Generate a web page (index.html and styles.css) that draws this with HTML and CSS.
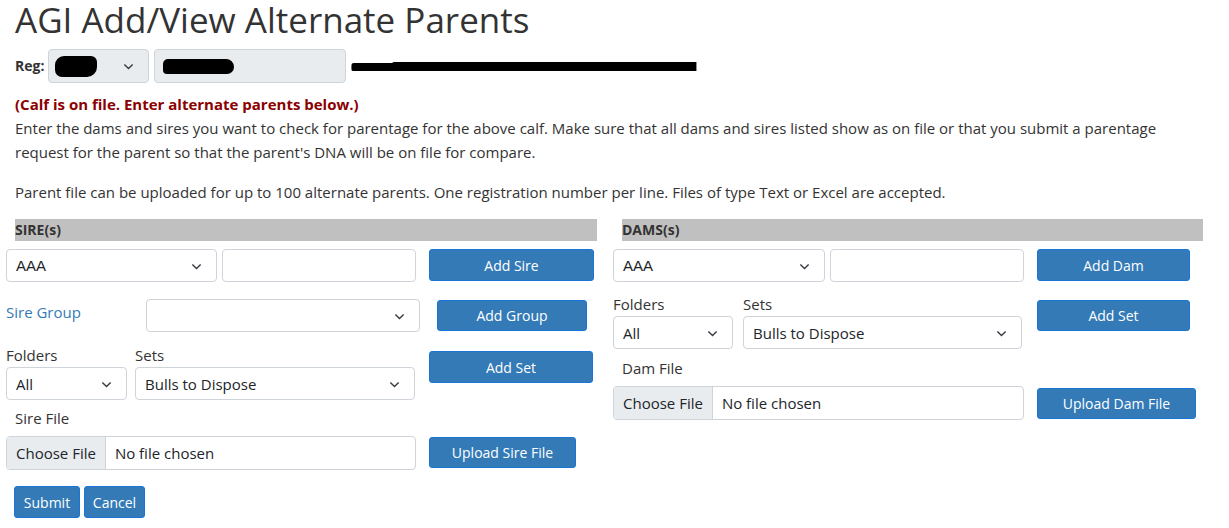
FILE: index.html
```html
<!DOCTYPE html>
<html lang="en">
<head>
    <meta charset="UTF-8">
    <title>AGI Add/View Alternate Parents</title>
    <link rel="stylesheet" href="styles.css">
</head>
<body>
    <div class="page">
        <h1>AGI Add/View Alternate Parents</h1>

        <div class="reg-line">
            <label class="reg-label">Reg:</label>
            <span class="select-wrap reg-breed">
                <span class="fake-select disabled"><span class="blot blot-a"></span></span>
                <svg class="chev" viewBox="0 0 16 16"><path d="M2 5l6 6 6-6"/></svg>
            </span>
            <span class="fake-input disabled reg-num"><span class="blot blot-b"></span></span>
            <span class="blot blot-name"></span>
        </div>

        <p class="notice">(Calf is on file. Enter alternate parents below.)</p>
        <p class="intro">Enter the dams and sires you want to check for parentage for the above calf. Make sure that all dams and sires listed show as on file or that you submit a parentage request for the parent so that the parent's DNA will be on file for compare.</p>
        <p class="intro">Parent file can be uploaded for up to 100 alternate parents. One registration number per line. Files of type Text or Excel are accepted.</p>

        <div class="columns">
            <!-- sires -->
            <div class="col col-sire">
                <div class="section-head">SIRE(s)</div>

                <div class="row">
                    <span class="select-wrap w-breed">
                        <select class="form-select sans"><option>AAA</option></select>
                        <svg class="chev" viewBox="0 0 16 16"><path d="M2 5l6 6 6-6"/></svg>
                    </span>
                    <input type="text" class="form-control w-reg">
                    <button class="btn btn-add">Add Sire</button>
                </div>

                <div class="row row-group">
                    <a href="#" class="group-link">Sire Group</a>
                    <span class="select-wrap w-group">
                        <select class="form-select"><option></option></select>
                        <svg class="chev" viewBox="0 0 16 16"><path d="M2 5l6 6 6-6"/></svg>
                    </span>
                    <button class="btn btn-add-group">Add Group</button>
                </div>

                <div class="row row-sets">
                    <div class="field">
                        <label>Folders</label>
                        <span class="select-wrap w-folder">
                            <select class="form-select"><option>All</option></select>
                            <svg class="chev" viewBox="0 0 16 16"><path d="M2 5l6 6 6-6"/></svg>
                        </span>
                    </div>
                    <div class="field">
                        <label>Sets</label>
                        <span class="select-wrap w-sets">
                            <select class="form-select"><option>Bulls to Dispose</option></select>
                            <svg class="chev" viewBox="0 0 16 16"><path d="M2 5l6 6 6-6"/></svg>
                        </span>
                    </div>
                    <button class="btn btn-add-set">Add Set</button>
                </div>

                <label class="file-label">Sire File</label>
                <div class="row row-file">
                    <div class="file-control w-file">
                        <span class="file-btn">Choose File</span>
                        <span class="file-name">No file chosen</span>
                    </div>
                    <button class="btn btn-upload-sire">Upload Sire File</button>
                </div>

                <div class="actions">
                    <button class="btn btn-submit">Submit</button>
                    <button class="btn btn-cancel">Cancel</button>
                </div>
            </div>

            <!-- dams -->
            <div class="col col-dam">
                <div class="section-head">DAMS(s)</div>

                <div class="row">
                    <span class="select-wrap w-breed">
                        <select class="form-select sans"><option>AAA</option></select>
                        <svg class="chev" viewBox="0 0 16 16"><path d="M2 5l6 6 6-6"/></svg>
                    </span>
                    <input type="text" class="form-control w-reg">
                    <button class="btn btn-add btn-add-dam">Add Dam</button>
                </div>

                <div class="row row-sets dam-sets">
                    <div class="field">
                        <label>Folders</label>
                        <span class="select-wrap w-folder">
                            <select class="form-select"><option>All</option></select>
                            <svg class="chev" viewBox="0 0 16 16"><path d="M2 5l6 6 6-6"/></svg>
                        </span>
                    </div>
                    <div class="field">
                        <label>Sets</label>
                        <span class="select-wrap w-sets">
                            <select class="form-select"><option>Bulls to Dispose</option></select>
                            <svg class="chev" viewBox="0 0 16 16"><path d="M2 5l6 6 6-6"/></svg>
                        </span>
                    </div>
                    <button class="btn btn-add-dam-set">Add Set</button>
                </div>

                <label class="file-label dam-file-label">Dam File</label>
                <div class="row row-file">
                    <div class="file-control w-file">
                        <span class="file-btn">Choose File</span>
                        <span class="file-name">No file chosen</span>
                    </div>
                    <button class="btn btn-upload-dam">Upload Dam File</button>
                </div>
            </div>
        </div>
    </div>
</body>
</html>
```

FILE: styles.css
```css
body {
    margin: 0;
    font-family: 'Open Sans', 'Liberation Sans', sans-serif;
    font-size: 15px;
    line-height: 24px;
    color: #333;
    background: #fff;
}

.page {
    padding: 0 0 0 15px;
}

h1 {
    font-size: 35px;
    font-weight: 400;
    line-height: 30px;
    margin: 0;
    padding-top: 5px;
    color: #333;
}

/* reg row */
.reg-line {
    display: flex;
    align-items: center;
    margin-top: 14px;
    height: 34px;
}

.reg-label {
    font-weight: 700;
    font-size: 14px;
    margin-right: 4px;
}

.reg-breed {
    width: 101px;
    margin-right: 5px;
}

.fake-select,
.fake-input {
    display: flex;
    align-items: center;
    box-sizing: border-box;
    height: 34px;
    border: 1px solid #ced4da;
    border-radius: 4px;
    padding-left: 6px;
}

.disabled {
    background: #e9ecef;
}

.reg-num {
    width: 192px;
    padding-left: 8px;
}

.blot {
    display: inline-block;
    background: #000;
    filter: blur(0.7px);
}

.blot-a {
    width: 42px;
    height: 21px;
    border-radius: 9px 6px 10px 7px;
}

.blot-b {
    width: 71px;
    height: 15px;
    border-radius: 5px 8px 7px 4px;
}

.blot-name {
    margin-left: 5px;
    width: 345px;
    height: 8px;
    border-radius: 3px 4px 3px 2px;
    margin-top: 2px;
    box-shadow: 40px -2px 0 -1px #000, 180px 1px 0 -1px #000, 290px -1px 0 -1px #000;
    clip-path: inset(-4px 0 -4px 0);
}

/* text */
p {
    margin: 0;
}

.notice {
    color: #8b0000;
    font-weight: 700;
    margin-top: 10px;
    line-height: 23px;
}

.intro {
    padding-right: 30px;
}

.intro + .intro {
    margin-top: 16px;
}

/* columns */
.columns {
    display: flex;
    margin-left: -9px;
    margin-top: 15px;
}

.col-sire {
    width: 607px;
}

.col-dam {
    width: 600px;
}

.section-head {
    background: #c0c0c0;
    margin-left: 9px;
    height: 22px;
    line-height: 22px;
    font-weight: 700;
    font-size: 14px;
    color: #333;
    margin-bottom: 8px;
}

.col-sire .section-head {
    width: 582px;
}

.col-dam .section-head {
    width: 581px;
}

.row {
    display: flex;
    align-items: flex-start;
}

.select-wrap {
    position: relative;
    display: inline-block;
}

.chev {
    position: absolute;
    right: 14px;
    top: 12px;
    width: 13px;
    height: 11px;
    fill: none;
    stroke: #343a40;
    stroke-width: 2;
    pointer-events: none;
}

.form-select,
.form-control {
    box-sizing: border-box;
    width: 100%;
    height: 33px;
    border: 1px solid #ced4da;
    border-radius: 4px;
    background: #fff;
    font-family: 'Open Sans', 'Liberation Sans', sans-serif;
    font-size: 15px;
    color: #212529;
    padding: 0 30px 0 9px;
    -webkit-appearance: none;
    appearance: none;
    display: block;
}

.form-select.sans {
    font-family: 'Liberation Sans', Arial, sans-serif;
}

.form-control {
    padding: 0 9px;
}

.w-breed { width: 211px; margin-right: 5px; }
.w-reg { width: 194px; }
.w-group { width: 274px; }
.w-folder { width: 121px; }
.w-sets { width: 280px; }
.w-file { width: 410px; }

.col-dam .w-breed { width: 212px; }

.btn {
    box-sizing: border-box;
    height: 32px;
    background: #337ab7;
    border: 1px solid #1b75d8;
    border-radius: 3px;
    color: #fff;
    font-family: 'Open Sans', 'Liberation Sans', sans-serif;
    font-size: 14px;
    padding: 0;
    cursor: pointer;
}

.btn-add { width: 165px; margin-left: 13px; }
.btn-add-dam { width: 153px; }
.btn-add-group { width: 150px; margin-left: 17px; margin-top: 1px; height: 31px; }
.btn-add-set { width: 164px; margin-left: 14px; margin-top: 8px; }
.btn-upload-sire { width: 147px; margin-left: 13px; margin-top: 1px; height: 31px; }
.btn-add-dam-set { width: 153px; margin-left: 15px; margin-top: 8px; height: 31px; }
.btn-upload-dam { width: 159px; margin-left: 13px; margin-top: 2px; height: 31px; }
.btn-submit { width: 66px; }
.btn-cancel { width: 61px; }

.row-group {
    margin-top: 17px;
}

.group-link {
    color: #337ab7;
    text-decoration: none;
    width: 140px;
    line-height: 24px;
    padding-top: 1px;
}

.row-sets {
    margin-top: 11px;
}

.field {
    display: flex;
    flex-direction: column;
    margin-right: 8px;
}

.field:nth-child(2) {
    margin-right: 0;
}

.field label {
    line-height: 24px;
    height: 24px;
    color: #333;
}

.dam-sets {
    margin-top: 10px;
}

.dam-sets .field:first-child {
    margin-right: 10px;
}

.dam-sets .w-folder {
    width: 120px;
}

.dam-sets .w-sets {
    width: 279px;
}

.file-label {
    display: block;
    margin-left: 9px;
    margin-top: 6px;
    height: 24px;
    line-height: 24px;
}

.dam-file-label {
    margin-top: 7px;
}

.row-file {
    margin-top: 6px;
}

.file-control {
    box-sizing: border-box;
    display: flex;
    height: 34px;
    border: 1px solid #ced4da;
    border-radius: 4px;
    overflow: hidden;
    color: #212529;
    line-height: 32px;
}

.file-btn {
    background: #e9ecef;
    border-right: 1px solid #ced4da;
    padding: 0 9px;
}

.file-name {
    padding-left: 9px;
}

.col-dam .file-control {
    width: 411px;
}

.actions {
    display: flex;
    gap: 4px;
    margin-left: 8px;
    margin-top: 16px;
}
```
